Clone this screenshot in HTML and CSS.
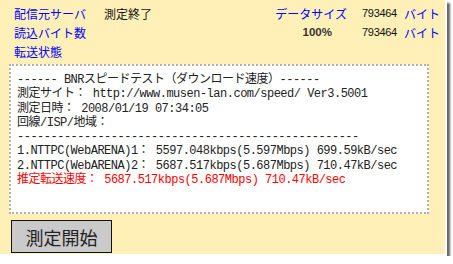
FILE: index.html
```html
<!DOCTYPE html>
<html>
    <head>
        <title>BNRスピードテスト</title>
        <link rel="stylesheet" href="styles.css">
    </head>
    <body>
        <div class="window">
            <div class="status-grid">
                <div class="label">配信元サーバ</div>
                <div class="value">測定終了</div>
                <div class="label right">データサイズ</div>
                <div class="num">793464</div>
                <div class="label">バイト</div>

                <div class="label">読込バイト数</div>
                <div class="value"></div>
                <div class="percent">100%</div>
                <div class="num">793464</div>
                <div class="label">バイト</div>

                <div class="label">転送状態</div>
            </div>
            <div class="result">
                <div class="line">------ BNRスピードテスト（ダウンロード速度）------</div>
                <div class="line">測定サイト： http://www.musen-lan.com/speed/ Ver3.5001</div>
                <div class="line">測定日時： 2008/01/19 07:34:05</div>
                <div class="line">回線/ISP/地域：</div>
                <div class="line">---------------------------------------------------</div>
                <div class="line">1.NTTPC(WebARENA)1： 5597.048kbps(5.597Mbps) 699.59kB/sec</div>
                <div class="line">2.NTTPC(WebARENA)2： 5687.517kbps(5.687Mbps) 710.47kB/sec</div>
                <div class="line estimate">推定転送速度： 5687.517kbps(5.687Mbps) 710.47kB/sec</div>
            </div>
            <div class="actions">
                <button class="start-button">測定開始</button>
            </div>
        </div>
    </body>
</html>
```

FILE: styles.css
```css
body {
    margin: 0;
    background-color: #ffffff;
    font-family: "Noto Sans CJK JP", sans-serif;
}
.window {
    width: 447px;
    height: 256px;
    box-sizing: border-box;
    background-color: #fff0b8;
    border-right: 2px solid #ffffff;
    border-bottom: 2px solid #ffffff;
    box-shadow: 3px 3px 2px #666666;
    padding: 4px 0 0 9px;
}
.status-grid {
    display: grid;
    grid-template-columns: 90px 143px 115px 42px 36px;
    grid-auto-rows: 19px;
    padding-left: 5px;
    font-size: 12px;
    line-height: 19px;
}
.label {
    color: #0000ff;
}
.value {
    color: #111111;
}
.right {
    text-align: right;
    padding-right: 15px;
}
.percent {
    text-align: right;
    padding-right: 30px;
    font-family: "Liberation Sans", sans-serif;
    font-weight: bold;
    font-size: 11.5px;
    color: #333333;
}
.num {
    font-family: "Liberation Sans", sans-serif;
    font-size: 11px;
    letter-spacing: -0.3px;
    color: #111111;
}
.result {
    width: 420px;
    height: 150px;
    box-sizing: border-box;
    margin-top: 3px;
    border: 2px dotted #b5b1a0;
    background-color: #ffffff;
    padding: 7px 0 0 6px;
    font-family: "Liberation Mono", "Noto Sans CJK JP", monospace;
    font-size: 12px;
    letter-spacing: -0.5px;
    line-height: 14.3px;
    color: #222222;
}
.line {
    white-space: pre;
}
.estimate {
    color: #ff0000;
}
.actions {
    padding: 6px 0 0 2px;
}
.start-button {
    width: 101px;
    height: 33px;
    background-color: #cacaca;
    border: 1px solid #111111;
    border-radius: 0;
    font-family: "Noto Sans CJK JP", sans-serif;
    font-size: 18px;
    color: #222222;
    padding: 0;
}
```
